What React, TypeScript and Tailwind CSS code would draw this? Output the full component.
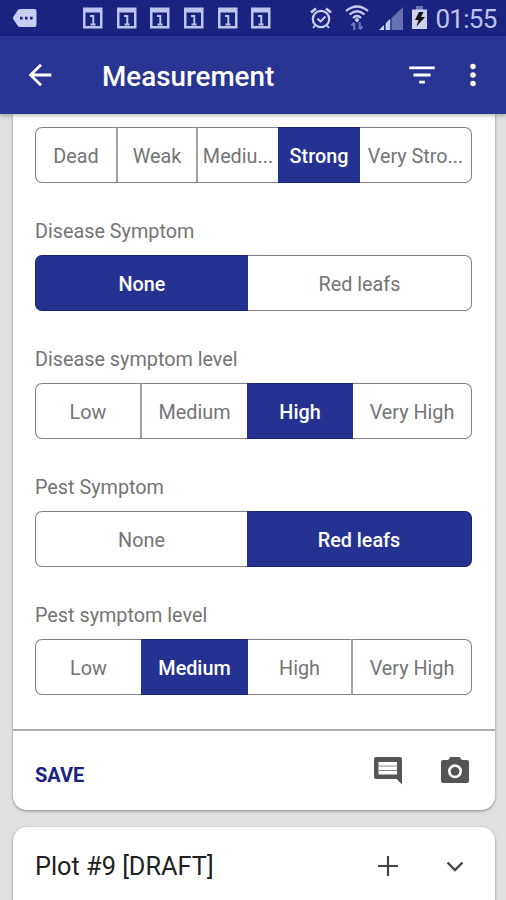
import { useState } from 'react';
import { MdArrowBack, MdFilterList, MdMoreVert } from 'react-icons/md';

interface Question {
  label: string;
  options: string[];
  selected: number;
  columns: string;
}

const questions: Question[] = [
  {
    label: 'Vigor',
    options: ['Dead', 'Weak', 'Mediu...', 'Strong', 'Very Stro...'],
    selected: 3,
    columns: 'grid-cols-[81px_80px_82px_82px_112px]',
  },
  {
    label: 'Disease Symptom',
    options: ['None', 'Red leafs'],
    selected: 0,
    columns: 'grid-cols-[213px_224px]',
  },
  {
    label: 'Disease symptom level',
    options: ['Low', 'Medium', 'High', 'Very High'],
    selected: 2,
    columns: 'grid-cols-[105px_107px_106px_119px]',
  },
  {
    label: 'Pest Symptom',
    options: ['None', 'Red leafs'],
    selected: 1,
    columns: 'grid-cols-[212px_225px]',
  },
  {
    label: 'Pest symptom level',
    options: ['Low', 'Medium', 'High', 'Very High'],
    selected: 1,
    columns: 'grid-cols-[106px_107px_103px_121px]',
  },
];

function CalendarIcon() {
  return (
    <svg width="20" height="22" viewBox="0 0 20 22" fill="none">
      <path d="M0 0.500h19.500v21H0zM2.500 5.500v13.500h14.500v-13.500z" fill="#bfc5ee" fillRule="evenodd" />
      <path d="M7 9h3.300v8.500M7.500 17.500h5" stroke="#bfc5ee" strokeWidth="1.900" />
    </svg>
  );
}

function CommentIcon() {
  return (
    <svg width="34" height="34" viewBox="0 0 34 34">
      <path d="M5 3h24a2 2 0 0 1 2 2v25.500l-5.500-5.500H5a2 2 0 0 1-2-2V5a2 2 0 0 1 2-2z" fill="#555" />
      <path d="M7.500 8h18.500v12.500H7.500z" fill="#fff" />
      <path d="M7.500 12h18.500M7.500 16.500h18.500" stroke="#8a8a8a" strokeWidth="1.200" />
    </svg>
  );
}

function CameraIcon() {
  return (
    <svg className="ml-[33px]" width="34" height="34" viewBox="0 0 34 34">
      <path d="M12.500 3h9l2.500 3h5a2 2 0 0 1 2 2v19a2 2 0 0 1-2 2H5a2 2 0 0 1-2-2V8a2 2 0 0 1 2-2h5z" fill="#555" />
      <circle cx="17" cy="17.300" r="5.700" fill="none" stroke="#fff" strokeWidth="2.600" />
    </svg>
  );
}

function StatusBar() {
  return (
    <div className="flex h-9 items-center bg-[#1a237e] pl-[13px] text-[#bfc5ee]">
      <svg width="24" height="18" viewBox="0 0 24 18">
        <path d="M7 0h14.500a2 2 0 0 1 2 2v14a2 2 0 0 1-2 2H7Q5.500 18 4.500 16.500L0.500 10.500Q-0.500 9 0.500 7.500L4.500 1.500Q5.500 0 7 0z" fill="#c9cdf0" />
        <path d="M7 7.800h2.600v2.600H7zM12 7.800h2.600v2.600H12zM17 7.800h2.600v2.600H17z" fill="#1a237e" />
      </svg>
      <div className="ml-[46px] flex gap-[13.700px]">
        {[0, 1, 2, 3, 4, 5].map((n) => (
          <CalendarIcon key={n} />
        ))}
      </div>
      <svg className="ml-[39px]" width="22" height="24" viewBox="0 0 22 24" fill="none" stroke="#c9cdf0">
        <circle cx="11" cy="13" r="8.200" strokeWidth="2.200" />
        <path d="M7.500 12.500l3 3 5-5" strokeWidth="2" />
        <path d="M1 6.500l5-4M21 6.500l-5-4" strokeWidth="2.800" />
        <path d="M5 19.500l-2 2.500M17 19.500l2 2.500" strokeWidth="2" />
      </svg>
      <svg className="ml-[13px]" width="24" height="26" viewBox="0 0 24 26" fill="none" stroke="#c9cdf0" strokeWidth="2.200">
        <path d="M1 6Q12-3 23 6" />
        <path d="M4.500 9.500Q12 3 19.500 9.500" />
        <path d="M8 13Q12 9 16 13" />
        <path d="M12 12.500l2.500 2.500-2.500 2.500L9.500 15z" fill="#c9cdf0" stroke="none" />
        <path d="M9.300 25v-7M6.500 20.500l2.800-3M14.700 17v7M17.500 21.500l-2.800 3" stroke="#6f76b8" />
      </svg>
      <svg className="ml-[10px]" width="24" height="24" viewBox="0 0 24 24">
        <path d="M0 24L24 1v23z" fill="#6670b3" />
        <path d="M0 24l6-6v6zM7 24v-7l4-4v11z" fill="#c9cdf0" />
        <path d="M5.500 17v7M12 12v12" stroke="#1a237e" />
      </svg>
      <svg className="ml-[9px]" width="15" height="24" viewBox="0 0 15 24">
        <path d="M4 0h7v4H4z" fill="#6670b3" />
        <path d="M0 3.500h15V23H0z" fill="#cfd2ea" />
        <path d="M7 6h4.500L9 11h4L4.500 20.500l2-6.500H3z" fill="#111" />
      </svg>
      <span className="ml-[8px] mt-[2px] text-[26px] leading-9 tracking-[-0.700px]">01:55</span>
    </div>
  );
}

function AppBar() {
  return (
    <header className="relative flex h-[78px] items-center bg-[#283593] pl-[23px] pr-4 text-white shadow-[0_2px_4px_rgba(0,0,0,0.25)]">
      <MdArrowBack size={34} />
      <h1 className="ml-[45px] mt-[3px] flex-1 text-[27.800px] font-medium">Measurement</h1>
      <MdFilterList size={34} />
      <MdMoreVert size={34} className="ml-[17px]" />
    </header>
  );
}

function Segmented({ question }: { question: Question }) {
  const [selected, setSelected] = useState(question.selected);
  const last = question.options.length - 1;

  return (
    <div className={`grid h-14 w-[437px] ${question.columns}`}>
      {question.options.map((option, i) => (
        <button
          key={option}
          onClick={() => setSelected(i)}
          className={`whitespace-nowrap border-y pt-[3px] text-center text-[19.800px] ${
            i === 0 ? 'rounded-l-[7px] border-l' : ''
          } ${i === last ? 'rounded-r-[7px] border-r' : ''} ${
            i > 0 && i !== selected && i - 1 !== selected ? 'border-l-2 border-l-[#a0a0a0]' : ''
          } ${
            selected === i
              ? 'border-[#1a237e] bg-[#243392] font-medium text-white'
              : 'border-y-[#808080] border-r-[#808080] text-[#747474]'
          } ${i === 0 && selected !== 0 ? 'border-l-[#808080]' : ''}`}
        >
          {option}
        </button>
      ))}
    </div>
  );
}

export default function App() {
  return (
    <div className="h-[900px] w-[506px] overflow-hidden bg-[#e0e0e0] font-['Roboto',sans-serif]">
      <StatusBar />
      <AppBar />
      <main className="pl-[13px] pr-[11px]">
        <section className="h-[696px] rounded-b-[14px] bg-white shadow-[0_1px_3px_rgba(0,0,0,0.4)]">
          <div className="flex h-[615px] flex-col px-[22px] pt-[13px]">
            {questions.map((question, i) => (
              <div key={question.label}>
                {i > 0 && (
                  <p className="mt-8 mb-2 h-8 text-[19.800px] leading-[33px] text-[#747474]">{question.label}</p>
                )}
                <Segmented question={question} />
              </div>
            ))}
          </div>
          <div className="flex h-[81px] items-center border-t-2 border-[#aaa] pl-[22px] pr-[23px]">
            <button className="mt-2 flex-1 text-left text-[20px] font-bold text-[#1a237e]">SAVE</button>
            <CommentIcon />
            <CameraIcon />
          </div>
        </section>
        <section className="mt-[17px] flex h-20 items-center rounded-t-[14px] bg-white pl-[22px] pr-[23px] shadow-[0_1px_3px_rgba(0,0,0,0.4)]">
          <h2 className="flex-1 text-[25.300px] text-[#212121]">Plot #9 [DRAFT]</h2>
          <svg className="-mt-0.5" width="34" height="34" viewBox="0 0 34 34" fill="none" stroke="#444" strokeWidth="2.200">
            <path d="M17 7v20M7 17h20" />
          </svg>
          <svg className="-mt-0.5 ml-[33px]" width="34" height="34" viewBox="0 0 34 34" fill="none" stroke="#444" strokeWidth="2.400">
            <path d="M9.500 13.500l7.500 7.500 7.500-7.500" />
          </svg>
        </section>
      </main>
    </div>
  );
}
